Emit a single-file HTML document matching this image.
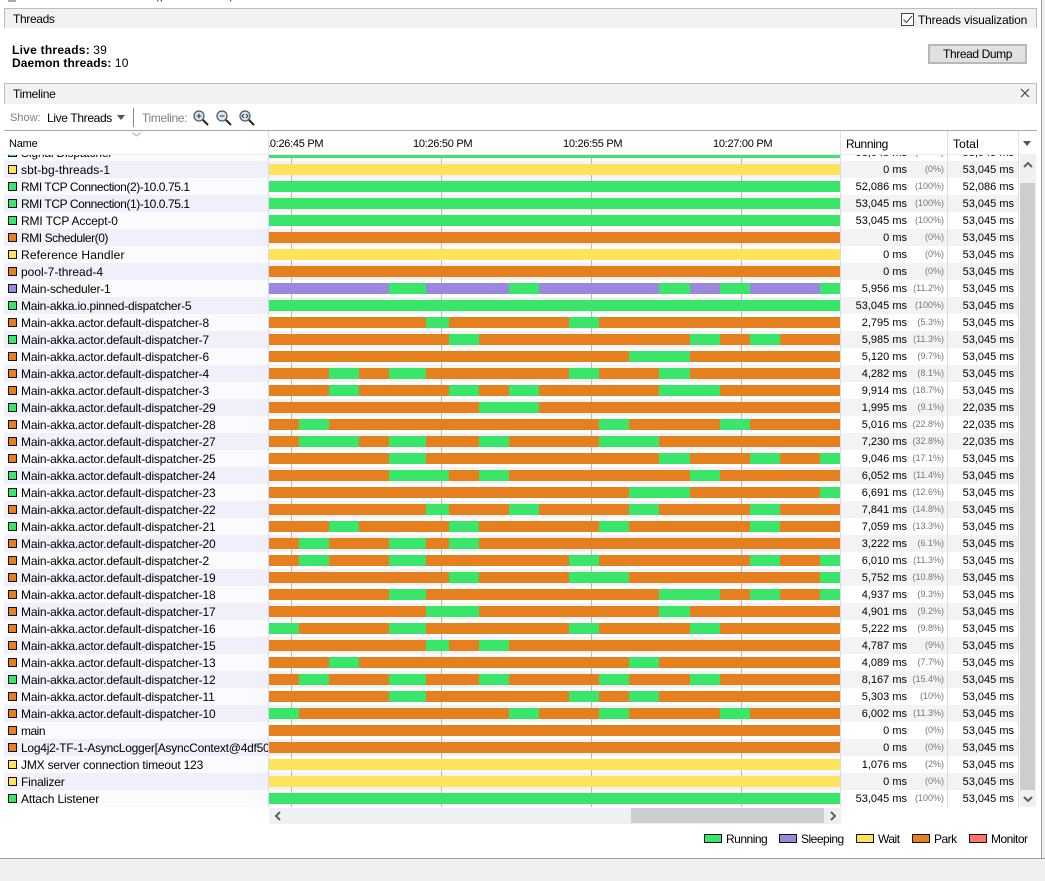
<!DOCTYPE html>
<html><head><meta charset="utf-8"><style>
html,body{margin:0;padding:0;width:1045px;height:881px;overflow:hidden;background:#fff;font-family:"Liberation Sans","Noto Sans CJK JP",sans-serif;font-size:12px;color:#000}
div,span,svg{position:absolute}
.n{position:absolute}
#tb{left:0;top:155px;width:1019px;height:652px;overflow:hidden}
#nb{left:4px;top:0;width:264px;height:652px;background:linear-gradient(#eff0f9 17px,#fafaff 17px) 0 6px/100% 34px}
#rb{left:269px;top:0;width:750px;height:652px;background:linear-gradient(#f3f3f3 17px,#fff 17px) 0 6px/100% 34px}
.tk{top:0;width:1px;height:652px;background:#bcbcbc}
.sp{top:0;width:1px;height:652px;background:#d3dcf5}
.r{left:0;width:1019px;height:17px;line-height:17px;white-space:nowrap}
.c{left:8px;top:4px;width:7px;height:7px;border:1px solid #111}
.n{left:21px;top:1px;width:247px;overflow:hidden;letter-spacing:-.17px}
.b{left:269px;top:3px;width:571px;height:11px}
.b i{position:absolute;top:0;height:11px;background:#3AE66A}
.u{right:112px;top:1px;font-size:11px}
.p{right:75px;top:0;font-size:9px;color:#777}
.o{right:5px;top:1px;font-size:11px}
.G{background:#3AE66A}.Y{background:#FFE35B}.O{background:#E6801E}.P{background:#9B88DC}.M{background:#FF7566}
.lg{top:834px;width:16px;height:7px;border:1px solid #111}
.ll{top:832px;line-height:14px;letter-spacing:-.5px}
.hd{background:#f2f2f2;left:5px;width:1031px}
.ln{background:#bdbdbd}
.tm{top:6px;line-height:14px;font-size:11px;letter-spacing:-.28px;white-space:nowrap}
</style></head><body>
<div style="left:155px;top:-12px;line-height:14px;color:#333;white-space:nowrap;letter-spacing:1px">(pid 131520)</div>
<div style="left:8px;top:-6px;width:8px;height:8px;background:#aaa"></div>

<div class="ln" style="left:1041px;top:0;width:1px;height:859px;background:#999"></div>
<div style="left:1042px;top:0;width:3px;height:881px;background:#f0f0f0"></div>
<div style="left:0;top:858px;width:1045px;height:23px;background:#f0f0f0;border-top:1px solid #999;box-sizing:border-box"></div>

<div class="hd" style="top:9px;height:19px"></div>
<div class="ln" style="left:4px;top:8px;width:1033px;height:1px"></div>
<div class="ln" style="left:4px;top:8px;width:1px;height:20px"></div>
<div class="ln" style="left:1036px;top:8px;width:1px;height:20px"></div>
<div style="left:13px;top:12px;line-height:14px;letter-spacing:-.35px">Threads</div>
<div style="left:901px;top:13px;width:11px;height:11px;border:1px solid #444;background:#fff"></div>
<svg style="left:901px;top:13px" width="13" height="13"><path d="M2.5 6.5L5.5 9.5L11 3" fill="none" stroke="#555" stroke-width="1.2"/></svg>
<div style="left:918px;top:13px;line-height:14px;letter-spacing:-.17px;white-space:nowrap">Threads visualization</div>

<div style="left:12px;top:43px;line-height:14px;white-space:nowrap"><b style="letter-spacing:.25px">Live threads:</b> <span style="position:static;letter-spacing:.2px">39</span></div>
<div style="left:12px;top:56px;line-height:14px;white-space:nowrap"><b style="letter-spacing:.1px">Daemon threads:</b> <span style="position:static;letter-spacing:.2px">10</span></div>
<div style="left:928px;top:44px;width:95px;height:16px;border:2px solid #b8b8b8;background:#e1e1e1;line-height:16px;text-align:center;letter-spacing:-.4px">Thread Dump</div>

<div class="hd" style="top:84px;height:20px"></div>
<div class="ln" style="left:4px;top:83px;width:1033px;height:1px"></div>
<div class="ln" style="left:4px;top:83px;width:1px;height:21px"></div>
<div class="ln" style="left:1036px;top:83px;width:1px;height:21px"></div>
<div style="left:13px;top:87px;line-height:14px;letter-spacing:-.3px">Timeline</div>
<svg style="left:1020px;top:88px" width="10" height="10"><path d="M1 1L9 9M9 1L1 9" stroke="#444" stroke-width="1.2"/></svg>

<div style="left:10px;top:111px;line-height:14px;color:#808080;font-size:11px">Show:</div>
<div style="left:47px;top:111px;line-height:14px;white-space:nowrap;letter-spacing:-.35px">Live Threads</div>
<svg style="left:117px;top:115px" width="8" height="5"><path d="M0 0H8L4 5Z" fill="#555"/></svg>
<div style="left:133px;top:108px;width:1px;height:19px;background:#888"></div>
<div style="left:142px;top:111px;line-height:14px;color:#808080;letter-spacing:-.35px">Timeline:</div>
<svg style="left:192px;top:109px" width="64" height="18">
<g fill="#d7e8f5" stroke="#556" stroke-width="1.3"><circle cx="7" cy="7" r="5"/><circle cx="30" cy="7" r="5"/><circle cx="53" cy="7" r="5"/></g>
<g stroke="#222" stroke-width="2"><path d="M11 11L16 16M34 11L39 16M57 11L62 16"/></g>
<g stroke="#333" stroke-width="1" fill="none"><path d="M4.5 7H9.5M7 4.5V9.5M27.5 7H32.5M52 5L50 7L52 9M54 5L56 7L54 9"/></g>
</svg>

<div style="left:4px;top:130px;width:1033px;height:1px;background:#a8a8a8"></div>
<div style="left:4px;top:154px;width:1032px;height:1px;background:#ececf4"></div>
<div style="left:9px;top:137px;line-height:14px;font-size:11px;letter-spacing:-.2px">Name</div>
<svg style="left:132px;top:132px" width="9" height="5"><path d="M0.5 0.5L4.5 4L8.5 0.5" fill="none" stroke="#aaa"/></svg>
<div style="left:268px;top:131px;width:1px;height:24px;background:#e4e4e4"></div>
<div style="left:269px;top:131px;width:571px;height:24px;overflow:hidden">
<div class="tm" style="left:-5px">10:26:45 PM</div>
<div class="tm" style="left:144px">10:26:50 PM</div>
<div class="tm" style="left:294px">10:26:55 PM</div>
<div class="tm" style="left:444px">10:27:00 PM</div>
</div>
<div style="left:840px;top:131px;width:1px;height:24px;background:#e4e4e4"></div>
<div style="left:947px;top:131px;width:1px;height:24px;background:#e4e4e4"></div>
<div style="left:1018px;top:131px;width:1px;height:24px;background:#e4e4e4"></div>
<div style="left:846px;top:137px;line-height:14px;letter-spacing:-.4px">Running</div>
<div style="left:953px;top:137px;line-height:14px;letter-spacing:.1px">Total</div>
<svg style="left:1023px;top:141px" width="8" height="5"><path d="M0 0H8L4 5Z" fill="#555"/></svg>

<div id="tb">
<div id="nb"></div><div id="rb"></div>
<div class="tk" style="left:291px"></div><div class="tk" style="left:441px"></div><div class="tk" style="left:591px"></div><div class="tk" style="left:741px"></div>
<div class="sp" style="left:268px"></div><div class="sp" style="left:840px"></div><div class="sp" style="left:947px"></div><div class="sp" style="left:1018px"></div>

<div class="r" style="top:-11px"><div class="c G"></div><div class="n">Signal Dispatcher</div><div class="b G"></div><div class="u">53,045 ms</div><div class="p">(100%)</div><div class="o">53,045 ms</div></div>
<div class="r" style="top:6px"><div class="c Y"></div><div class="n" style="letter-spacing:.07px">sbt-bg-threads-1</div><div class="b Y"></div><div class="u">0 ms</div><div class="p">(0%)</div><div class="o">53,045 ms</div></div>
<div class="r" style="top:23px"><div class="c G"></div><div class="n" style="letter-spacing:-.42px">RMI TCP Connection(2)-10.0.75.1</div><div class="b G"></div><div class="u">52,086 ms</div><div class="p">(100%)</div><div class="o">52,086 ms</div></div>
<div class="r" style="top:40px"><div class="c G"></div><div class="n" style="letter-spacing:-.42px">RMI TCP Connection(1)-10.0.75.1</div><div class="b G"></div><div class="u">53,045 ms</div><div class="p">(100%)</div><div class="o">53,045 ms</div></div>
<div class="r" style="top:57px"><div class="c G"></div><div class="n" style="letter-spacing:-.13px">RMI TCP Accept-0</div><div class="b G"></div><div class="u">53,045 ms</div><div class="p">(100%)</div><div class="o">53,045 ms</div></div>
<div class="r" style="top:74px"><div class="c O"></div><div class="n" style="letter-spacing:-.44px">RMI Scheduler(0)</div><div class="b O"></div><div class="u">0 ms</div><div class="p">(0%)</div><div class="o">53,045 ms</div></div>
<div class="r" style="top:91px"><div class="c Y"></div><div class="n" style="letter-spacing:.17px">Reference Handler</div><div class="b Y"></div><div class="u">0 ms</div><div class="p">(0%)</div><div class="o">53,045 ms</div></div>
<div class="r" style="top:108px"><div class="c O"></div><div class="n" style="letter-spacing:0">pool-7-thread-4</div><div class="b O"></div><div class="u">0 ms</div><div class="p">(0%)</div><div class="o">53,045 ms</div></div>
<div class="r" style="top:125px"><div class="c P"></div><div class="n" style="letter-spacing:-.2px">Main-scheduler-1</div><div class="b P"><i style="left:120px;width:37px"></i><i style="left:240px;width:30px"></i><i style="left:390px;width:31px"></i><i style="left:451px;width:30px"></i><i style="left:551px;width:20px"></i></div><div class="u">5,956 ms</div><div class="p">(11.2%)</div><div class="o">53,045 ms</div></div>
<div class="r" style="top:142px"><div class="c G"></div><div class="n" style="letter-spacing:-.22px">Main-akka.io.pinned-dispatcher-5</div><div class="b G"></div><div class="u">53,045 ms</div><div class="p">(100%)</div><div class="o">53,045 ms</div></div>
<div class="r" style="top:159px"><div class="c O"></div><div class="n">Main-akka.actor.default-dispatcher-8</div><div class="b O"><i style="left:157px;width:23px"></i><i style="left:300px;width:30px"></i></div><div class="u">2,795 ms</div><div class="p">(5.3%)</div><div class="o">53,045 ms</div></div>
<div class="r" style="top:176px"><div class="c G"></div><div class="n">Main-akka.actor.default-dispatcher-7</div><div class="b O"><i style="left:180px;width:30px"></i><i style="left:421px;width:30px"></i><i style="left:481px;width:30px"></i></div><div class="u">5,985 ms</div><div class="p">(11.3%)</div><div class="o">53,045 ms</div></div>
<div class="r" style="top:193px"><div class="c O"></div><div class="n">Main-akka.actor.default-dispatcher-6</div><div class="b O"><i style="left:360px;width:61px"></i></div><div class="u">5,120 ms</div><div class="p">(9.7%)</div><div class="o">53,045 ms</div></div>
<div class="r" style="top:210px"><div class="c O"></div><div class="n">Main-akka.actor.default-dispatcher-4</div><div class="b O"><i style="left:60px;width:30px"></i><i style="left:120px;width:37px"></i><i style="left:300px;width:30px"></i><i style="left:390px;width:31px"></i></div><div class="u">4,282 ms</div><div class="p">(8.1%)</div><div class="o">53,045 ms</div></div>
<div class="r" style="top:227px"><div class="c O"></div><div class="n">Main-akka.actor.default-dispatcher-3</div><div class="b O"><i style="left:60px;width:30px"></i><i style="left:180px;width:30px"></i><i style="left:240px;width:30px"></i><i style="left:390px;width:61px"></i></div><div class="u">9,914 ms</div><div class="p">(18.7%)</div><div class="o">53,045 ms</div></div>
<div class="r" style="top:244px"><div class="c G"></div><div class="n">Main-akka.actor.default-dispatcher-29</div><div class="b O"><i style="left:210px;width:60px"></i></div><div class="u">1,995 ms</div><div class="p">(9.1%)</div><div class="o">22,035 ms</div></div>
<div class="r" style="top:261px"><div class="c O"></div><div class="n">Main-akka.actor.default-dispatcher-28</div><div class="b O"><i style="left:30px;width:30px"></i><i style="left:330px;width:30px"></i><i style="left:451px;width:30px"></i></div><div class="u">5,016 ms</div><div class="p">(22.8%)</div><div class="o">22,035 ms</div></div>
<div class="r" style="top:278px"><div class="c O"></div><div class="n">Main-akka.actor.default-dispatcher-27</div><div class="b O"><i style="left:30px;width:60px"></i><i style="left:120px;width:37px"></i><i style="left:210px;width:30px"></i><i style="left:330px;width:60px"></i></div><div class="u">7,230 ms</div><div class="p">(32.8%)</div><div class="o">22,035 ms</div></div>
<div class="r" style="top:295px"><div class="c O"></div><div class="n">Main-akka.actor.default-dispatcher-25</div><div class="b O"><i style="left:120px;width:37px"></i><i style="left:390px;width:31px"></i><i style="left:481px;width:30px"></i><i style="left:551px;width:20px"></i></div><div class="u">9,046 ms</div><div class="p">(17.1%)</div><div class="o">53,045 ms</div></div>
<div class="r" style="top:312px"><div class="c G"></div><div class="n">Main-akka.actor.default-dispatcher-24</div><div class="b O"><i style="left:120px;width:60px"></i><i style="left:210px;width:30px"></i><i style="left:421px;width:30px"></i></div><div class="u">6,052 ms</div><div class="p">(11.4%)</div><div class="o">53,045 ms</div></div>
<div class="r" style="top:329px"><div class="c G"></div><div class="n">Main-akka.actor.default-dispatcher-23</div><div class="b O"><i style="left:360px;width:61px"></i><i style="left:551px;width:20px"></i></div><div class="u">6,691 ms</div><div class="p">(12.6%)</div><div class="o">53,045 ms</div></div>
<div class="r" style="top:346px"><div class="c O"></div><div class="n">Main-akka.actor.default-dispatcher-22</div><div class="b O"><i style="left:157px;width:23px"></i><i style="left:240px;width:30px"></i><i style="left:360px;width:30px"></i><i style="left:481px;width:30px"></i></div><div class="u">7,841 ms</div><div class="p">(14.8%)</div><div class="o">53,045 ms</div></div>
<div class="r" style="top:363px"><div class="c G"></div><div class="n">Main-akka.actor.default-dispatcher-21</div><div class="b O"><i style="left:60px;width:30px"></i><i style="left:180px;width:30px"></i><i style="left:330px;width:30px"></i><i style="left:481px;width:30px"></i></div><div class="u">7,059 ms</div><div class="p">(13.3%)</div><div class="o">53,045 ms</div></div>
<div class="r" style="top:380px"><div class="c O"></div><div class="n">Main-akka.actor.default-dispatcher-20</div><div class="b O"><i style="left:30px;width:30px"></i><i style="left:120px;width:37px"></i><i style="left:180px;width:30px"></i></div><div class="u">3,222 ms</div><div class="p">(6.1%)</div><div class="o">53,045 ms</div></div>
<div class="r" style="top:397px"><div class="c O"></div><div class="n">Main-akka.actor.default-dispatcher-2</div><div class="b O"><i style="left:30px;width:30px"></i><i style="left:120px;width:37px"></i><i style="left:300px;width:30px"></i><i style="left:481px;width:30px"></i><i style="left:551px;width:20px"></i></div><div class="u">6,010 ms</div><div class="p">(11.3%)</div><div class="o">53,045 ms</div></div>
<div class="r" style="top:414px"><div class="c O"></div><div class="n">Main-akka.actor.default-dispatcher-19</div><div class="b O"><i style="left:180px;width:30px"></i><i style="left:300px;width:60px"></i><i style="left:551px;width:20px"></i></div><div class="u">5,752 ms</div><div class="p">(10.8%)</div><div class="o">53,045 ms</div></div>
<div class="r" style="top:431px"><div class="c O"></div><div class="n">Main-akka.actor.default-dispatcher-18</div><div class="b O"><i style="left:120px;width:37px"></i><i style="left:390px;width:61px"></i><i style="left:481px;width:30px"></i><i style="left:551px;width:20px"></i></div><div class="u">4,937 ms</div><div class="p">(9.3%)</div><div class="o">53,045 ms</div></div>
<div class="r" style="top:448px"><div class="c O"></div><div class="n">Main-akka.actor.default-dispatcher-17</div><div class="b O"><i style="left:157px;width:53px"></i><i style="left:390px;width:31px"></i></div><div class="u">4,901 ms</div><div class="p">(9.2%)</div><div class="o">53,045 ms</div></div>
<div class="r" style="top:465px"><div class="c O"></div><div class="n">Main-akka.actor.default-dispatcher-16</div><div class="b O"><i style="left:0;width:30px"></i><i style="left:120px;width:37px"></i><i style="left:300px;width:30px"></i><i style="left:421px;width:30px"></i></div><div class="u">5,222 ms</div><div class="p">(9.8%)</div><div class="o">53,045 ms</div></div>
<div class="r" style="top:482px"><div class="c O"></div><div class="n">Main-akka.actor.default-dispatcher-15</div><div class="b O"><i style="left:157px;width:23px"></i><i style="left:210px;width:30px"></i></div><div class="u">4,787 ms</div><div class="p">(9%)</div><div class="o">53,045 ms</div></div>
<div class="r" style="top:499px"><div class="c O"></div><div class="n">Main-akka.actor.default-dispatcher-13</div><div class="b O"><i style="left:60px;width:30px"></i><i style="left:360px;width:30px"></i></div><div class="u">4,089 ms</div><div class="p">(7.7%)</div><div class="o">53,045 ms</div></div>
<div class="r" style="top:516px"><div class="c G"></div><div class="n">Main-akka.actor.default-dispatcher-12</div><div class="b O"><i style="left:30px;width:30px"></i><i style="left:120px;width:37px"></i><i style="left:210px;width:30px"></i><i style="left:330px;width:30px"></i><i style="left:421px;width:30px"></i></div><div class="u">8,167 ms</div><div class="p">(15.4%)</div><div class="o">53,045 ms</div></div>
<div class="r" style="top:533px"><div class="c O"></div><div class="n">Main-akka.actor.default-dispatcher-11</div><div class="b O"><i style="left:120px;width:37px"></i><i style="left:300px;width:30px"></i><i style="left:360px;width:30px"></i></div><div class="u">5,303 ms</div><div class="p">(10%)</div><div class="o">53,045 ms</div></div>
<div class="r" style="top:550px"><div class="c O"></div><div class="n">Main-akka.actor.default-dispatcher-10</div><div class="b O"><i style="left:0;width:30px"></i><i style="left:240px;width:30px"></i><i style="left:330px;width:30px"></i><i style="left:451px;width:30px"></i></div><div class="u">6,002 ms</div><div class="p">(11.3%)</div><div class="o">53,045 ms</div></div>
<div class="r" style="top:567px"><div class="c O"></div><div class="n" style="letter-spacing:-.5px">main</div><div class="b O"></div><div class="u">0 ms</div><div class="p">(0%)</div><div class="o">53,045 ms</div></div>
<div class="r" style="top:584px"><div class="c O"></div><div class="n" style="letter-spacing:-.25px">Log4j2-TF-1-AsyncLogger[AsyncContext@4df50bcc]-1</div><div class="b O"></div><div class="u">0 ms</div><div class="p">(0%)</div><div class="o">53,045 ms</div></div>
<div class="r" style="top:601px"><div class="c Y"></div><div class="n" style="letter-spacing:-.18px">JMX server connection timeout 123</div><div class="b Y"></div><div class="u">1,076 ms</div><div class="p">(2%)</div><div class="o">53,045 ms</div></div>
<div class="r" style="top:618px"><div class="c Y"></div><div class="n" style="letter-spacing:-.2px">Finalizer</div><div class="b Y"></div><div class="u">0 ms</div><div class="p">(0%)</div><div class="o">53,045 ms</div></div>
<div class="r" style="top:635px"><div class="c G"></div><div class="n" style="letter-spacing:-.13px">Attach Listener</div><div class="b G"></div><div class="u">53,045 ms</div><div class="p">(100%)</div><div class="o">53,045 ms</div></div>
</div>

<div style="left:1020px;top:155px;width:16px;height:652px;background:#f0f0f0"></div>
<div style="left:1020px;top:183px;width:15px;height:607px;background:#cdcdcd"></div>
<svg style="left:1023px;top:161px" width="10" height="8"><path d="M1 6L5 2L9 6" fill="none" stroke="#606060" stroke-width="2"/></svg>
<svg style="left:1023px;top:795px" width="10" height="8"><path d="M1 2L5 6L9 2" fill="none" stroke="#606060" stroke-width="2"/></svg>

<div style="left:269px;top:808px;width:572px;height:16px;background:#f0f0f0"></div>
<div style="left:631px;top:808px;width:193px;height:15px;background:#cdcdcd"></div>
<svg style="left:274px;top:811px" width="8" height="10"><path d="M6 1L2 5L6 9" fill="none" stroke="#606060" stroke-width="2"/></svg>
<svg style="left:829px;top:811px" width="8" height="10"><path d="M2 1L6 5L2 9" fill="none" stroke="#606060" stroke-width="2"/></svg>

<div class="lg G" style="left:704px"></div><div class="ll" style="left:726px">Running</div>
<div class="lg P" style="left:779px"></div><div class="ll" style="left:801px">Sleeping</div>
<div class="lg Y" style="left:856px"></div><div class="ll" style="left:878px">Wait</div>
<div class="lg O" style="left:912px"></div><div class="ll" style="left:934px">Park</div>
<div class="lg M" style="left:969px"></div><div class="ll" style="left:991px">Monitor</div>
</body></html>
